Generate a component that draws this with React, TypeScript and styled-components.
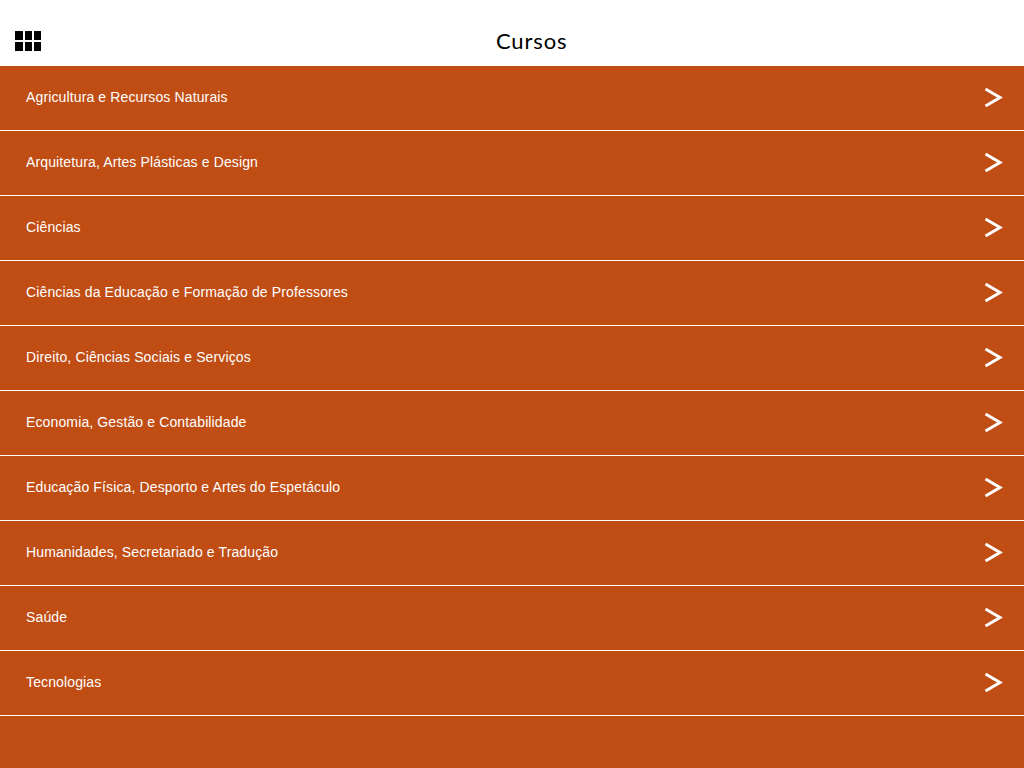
import styled, { createGlobalStyle } from "styled-components";

const COURSES = [
  "Agricultura e Recursos Naturais",
  "Arquitetura, Artes Plásticas e Design",
  "Ciências",
  "Ciências da Educação e Formação de Professores",
  "Direito, Ciências Sociais e Serviços",
  "Economia, Gestão e Contabilidade",
  "Educação Física, Desporto e Artes do Espetáculo",
  "Humanidades, Secretariado e Tradução",
  "Saúde",
  "Tecnologias",
];

const GlobalStyle = createGlobalStyle`
  html, body {
    margin: 0;
    height: 100%;
    background: #bf4d14;
  }
  body {
    font-family: "Liberation Sans", Arial, sans-serif;
  }
`;

const App = () => {
  return (
    <>
      <GlobalStyle />
      <Page>
        <Header>
          <MenuIcon aria-label="Menu">
            {Array.from({ length: 6 }).map((_, i) => (
              <MenuCell key={i} />
            ))}
          </MenuIcon>
          <Title>Cursos</Title>
        </Header>
        <List>
          {COURSES.map((course) => (
            <Row key={course}>
              <Label>{course}</Label>
              <Chevron width="20" height="22" viewBox="0 0 20 22">
                <path d="M1.5 3 L16 11.5 L1.5 20" fill="none" stroke="#fff" strokeWidth="3" />
              </Chevron>
            </Row>
          ))}
        </List>
      </Page>
    </>
  );
};

export default App;

const Page = styled.div`
  display: flex;
  flex-direction: column;
  width: 1024px;
  height: 768px;
  overflow: hidden;
  background: #bf4d14;
`;

const Header = styled.header`
  display: flex;
  align-items: flex-end;
  height: 66px;
  padding: 0 0 15px 15px;
  box-sizing: border-box;
  background: #fff;
`;

const MenuIcon = styled.div`
  display: grid;
  grid-template-columns: 8px 7px 7px;
  grid-template-rows: repeat(2, 9px);
  gap: 2px;
`;

const MenuCell = styled.span`
  background: #000;
`;

const Title = styled.h1`
  flex: 1;
  margin: 0 0 -3px;
  padding-left: 455px;
  font-family: "Lato", sans-serif;
  font-size: 22px;
  line-height: 26px;
  font-weight: 400;
  letter-spacing: 0.85px;
  color: #000;
`;

const List = styled.ul`
  margin: 0;
  padding: 0;
  list-style: none;
`;

const Row = styled.li`
  display: flex;
  align-items: center;
  justify-content: space-between;
  box-sizing: border-box;
  height: 65px;
  padding: 0 20px 2px 26px;
  border-bottom: 1px solid #fff;
`;

const Label = styled.span`
  font-size: 14px;
  letter-spacing: 0.13px;
  color: #fff;
`;

const Chevron = styled.svg`
  display: block;
`;
